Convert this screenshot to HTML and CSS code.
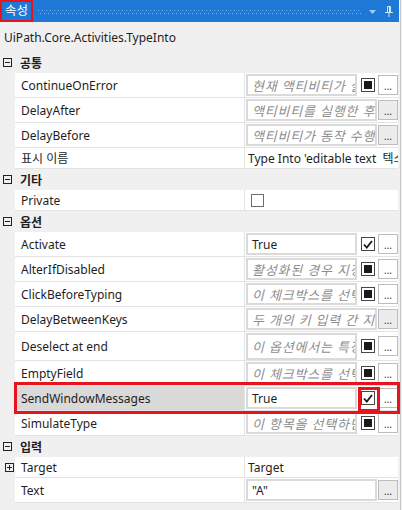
FILE: index.html
```html
<!DOCTYPE html>
<html lang="ko">
<head>
    <meta charset="UTF-8">
    <title>속성 - TypeInto</title>
    <link rel="stylesheet" href="styles.css">
</head>
<body>

<div class="panel">
    <!-- Barra de título del panel -->
    <header class="titlebar">
        <span class="title">속성</span>
        <span class="grip"></span>
        <svg class="arrow" width="7" height="4" viewBox="0 0 7 4"><path d="M0 0h7l-3.5 4z" fill="#a9cbf0"/></svg>
        <svg class="pin" width="8" height="11" viewBox="0 0 8 11">
            <path d="M2.5 0.5h3v6h-3z" fill="none" stroke="#d4e5f8"/>
            <path d="M0 6.5h8M4 7v4M4.5 1v5" stroke="#d4e5f8"/>
        </svg>
    </header>

    <div class="typename">UiPath.Core.Activities.TypeInto</div>

    <!-- 공통 -->
    <div class="category">
        <svg class="toggle" width="9" height="9" viewBox="0 0 9 9"><rect x="0.5" y="0.5" width="8" height="8" fill="none" stroke="#222"/><path d="M2 4.5h5" stroke="#222"/></svg>
        공통
    </div>
    <div class="row">
        <div class="name">ContinueOnError</div>
        <div class="value">
            <span class="field hint">현재 액티비티가 실패해도 계속할지 지정합니다.</span>
            <span class="check mixed"></span>
            <button class="more">...</button>
        </div>
    </div>
    <div class="row">
        <div class="name">DelayAfter</div>
        <div class="value">
            <span class="field wide hint">액티비티를 실행한 후의 지연 시간입니다.</span>
            <button class="more flat">...</button>
        </div>
    </div>
    <div class="row">
        <div class="name">DelayBefore</div>
        <div class="value">
            <span class="field wide hint">액티비티가 동작 수행을 시작하기 전의 지연 시간입니다.</span>
            <button class="more flat">...</button>
        </div>
    </div>
    <div class="row plain">
        <div class="name">표시 이름</div>
        <div class="value text">Type Into 'editable text&nbsp; 텍스트'</div>
    </div>

    <!-- 기타 -->
    <div class="category">
        <svg class="toggle" width="9" height="9" viewBox="0 0 9 9"><rect x="0.5" y="0.5" width="8" height="8" fill="none" stroke="#222"/><path d="M2 4.5h5" stroke="#222"/></svg>
        기타
    </div>
    <div class="row plain">
        <div class="name">Private</div>
        <div class="value">
            <span class="check empty"></span>
        </div>
    </div>

    <!-- 옵션 -->
    <div class="category">
        <svg class="toggle" width="9" height="9" viewBox="0 0 9 9"><rect x="0.5" y="0.5" width="8" height="8" fill="none" stroke="#222"/><path d="M2 4.5h5" stroke="#222"/></svg>
        옵션
    </div>
    <div class="row">
        <div class="name">Activate</div>
        <div class="value">
            <span class="field">True</span>
            <span class="check"><svg width="10" height="9" viewBox="0 0 10 9"><path d="M1 4.5l2.8 3L9 1" fill="none" stroke="#1a1a1a" stroke-width="1.8"/></svg></span>
            <button class="more">...</button>
        </div>
    </div>
    <div class="row">
        <div class="name">AlterIfDisabled</div>
        <div class="value">
            <span class="field hint">활성화된 경우 지정된 UI 요소를 변경합니다.</span>
            <span class="check mixed"></span>
            <button class="more">...</button>
        </div>
    </div>
    <div class="row">
        <div class="name">ClickBeforeTyping</div>
        <div class="value">
            <span class="field hint">이 체크박스를 선택하면 입력 전에 클릭합니다.</span>
            <span class="check mixed"></span>
            <button class="more">...</button>
        </div>
    </div>
    <div class="row">
        <div class="name">DelayBetweenKeys</div>
        <div class="value">
            <span class="field wide hint">두 개의 키 입력 간 지연 시간입니다.</span>
            <button class="more flat">...</button>
        </div>
    </div>
    <div class="row tall">
        <div class="name">Deselect at end</div>
        <div class="value">
            <span class="field hint">이 옵션에서는 특정 텍스트 입력 후 선택을 해제합니다.</span>
            <span class="check mixed"></span>
            <button class="more">...</button>
        </div>
    </div>
    <div class="row">
        <div class="name">EmptyField</div>
        <div class="value">
            <span class="field hint">이 체크박스를 선택하면 필드를 비웁니다.</span>
            <span class="check mixed"></span>
            <button class="more">...</button>
        </div>
    </div>
    <div class="row selected">
        <div class="name">SendWindowMessages</div>
        <div class="value">
            <span class="field">True</span>
            <span class="check"><svg width="10" height="9" viewBox="0 0 10 9"><path d="M1 4.5l2.8 3L9 1" fill="none" stroke="#1a1a1a" stroke-width="1.8"/></svg></span>
            <button class="more">...</button>
        </div>
        <span class="mark-row"></span>
        <span class="mark-check"></span>
    </div>
    <div class="row">
        <div class="name">SimulateType</div>
        <div class="value">
            <span class="field hint">이 항목을 선택하면 입력을 시뮬레이션합니다.</span>
            <span class="check mixed"></span>
            <button class="more">...</button>
        </div>
    </div>

    <!-- 입력 -->
    <div class="category">
        <svg class="toggle" width="9" height="9" viewBox="0 0 9 9"><rect x="0.5" y="0.5" width="8" height="8" fill="none" stroke="#222"/><path d="M2 4.5h5" stroke="#222"/></svg>
        입력
    </div>
    <div class="row plain">
        <div class="gutter">
            <svg class="toggle" width="9" height="9" viewBox="0 0 9 9"><rect x="0.5" y="0.5" width="8" height="8" fill="none" stroke="#222"/><path d="M2 4.5h5M4.5 2v5" stroke="#222"/></svg>
        </div>
        <div class="name">Target</div>
        <div class="value text">Target</div>
    </div>
    <div class="row">
        <div class="name">Text</div>
        <div class="value">
            <span class="field wide">"A"</span>
            <button class="more flat">...</button>
        </div>
    </div>
</div>

</body>
</html>
```

FILE: styles.css
```css
/* Panel de propiedades */
body {
    margin: 0;
    background-color: #f0f0f0;
    font-family: "Noto Sans", "Noto Sans CJK KR", sans-serif;
    font-size: 12px;
    color: #1e1e1e;
}

.panel {
    width: 401px;
    height: 510px;
    box-sizing: border-box;
    border-right: 1px solid #c6c6c6;
    overflow: hidden;
}

/* Barra azul */
.titlebar {
    display: flex;
    align-items: center;
    height: 22px;
    margin-right: 1px;
    background-color: #1e79d6;
    color: #fff;
}

.title {
    width: 33px;
    height: 22px;
    box-sizing: border-box;
    border: 2px solid #e8141c;
    padding-left: 3px;
    font-size: 12.5px;
    line-height: 17px;
}

.grip {
    flex: 1;
    height: 4px;
    margin: 2px 0 0 5px;
    background-image:
        linear-gradient(90deg, #7fb2ea 1px, transparent 1px),
        linear-gradient(90deg, #7fb2ea 1px, transparent 1px);
    background-size: 4px 1px, 4px 1px;
    background-position: 0 0, 2px 3px;
    background-repeat: repeat-x;
}

.arrow {
    margin: 2px 0 0 8px;
}

.pin {
    margin: 0 6px 0 9px;
}

.typename {
    display: flex;
    align-items: center;
    height: 30px;
    padding-left: 4px;
}

/* Categorías */
.category {
    display: flex;
    align-items: center;
    gap: 8px;
    width: 398px;
    height: 21px;
    padding-left: 3px;
    box-sizing: border-box;
    font-weight: bold;
}

/* Filas */
.row {
    position: relative;
    display: grid;
    grid-template-columns: 15px 230px 153px;
    height: 25px;
}

.row.plain {
    height: 21px;
}

.row.tall {
    height: 29px;
}

.gutter {
    grid-column: 1;
    display: flex;
    align-items: center;
    padding-left: 5px;
}

.name {
    grid-column: 2;
    display: flex;
    align-items: center;
    padding-left: 6px;
    background-color: #fff;
    border-right: 1px solid #e3e3e3;
    border-bottom: 1px solid #e3e3e3;
    white-space: nowrap;
    overflow: hidden;
}

.row.selected .name {
    background-color: #d9d9d9;
}

.value {
    grid-column: 3;
    display: flex;
    align-items: center;
    padding-left: 1px;
    background-color: #fff;
    border-bottom: 1px solid #e3e3e3;
    white-space: nowrap;
    overflow: hidden;
}

.value.text {
    padding-left: 3px;
}

/* Campos */
.field {
    flex: 1;
    min-width: 0;
    height: 22px;
    box-sizing: border-box;
    display: flex;
    align-items: center;
    padding-left: 4px;
    border: 2px solid #dadada;
    white-space: nowrap;
    overflow: hidden;
}

.field.wide {
    margin-right: 1px;
}

.row.tall .field {
    height: 27px;
}

.hint {
    font-size: 13px;
    letter-spacing: 0.8px;
    font-style: italic;
    color: #8d8d8d;
}

.check {
    width: 14px;
    height: 14px;
    box-sizing: border-box;
    margin: 0 3px 0 4px;
    display: flex;
    align-items: center;
    justify-content: center;
    border: 1px solid #474747;
    background-color: #fff;
}

.check.mixed::after {
    content: "";
    width: 8px;
    height: 8px;
    background-color: #1a1a1a;
}

.check.empty {
    width: 13px;
    height: 13px;
    margin-left: 5px;
    border-color: #6d6d6d;
}

.more {
    width: 20px;
    height: 20px;
    box-sizing: border-box;
    padding: 0 0 3px;
    display: flex;
    align-items: flex-end;
    justify-content: center;
    border: 1px solid #bdbdbd;
    background-color: #fff;
    font: 10px/1 "Noto Sans", sans-serif;
    color: #333;
}

.more.flat {
    background-color: #ececec;
}

/* Marcas rojas */
.mark-row {
    position: absolute;
    left: 14px;
    top: -4px;
    width: 386px;
    height: 32px;
    box-sizing: border-box;
    border: 3px solid #e8141c;
    z-index: 1;
}

.mark-check {
    position: absolute;
    left: 358px;
    top: 1px;
    width: 22px;
    height: 25px;
    box-sizing: border-box;
    border: 3px solid #e8141c;
    z-index: 1;
}
```
